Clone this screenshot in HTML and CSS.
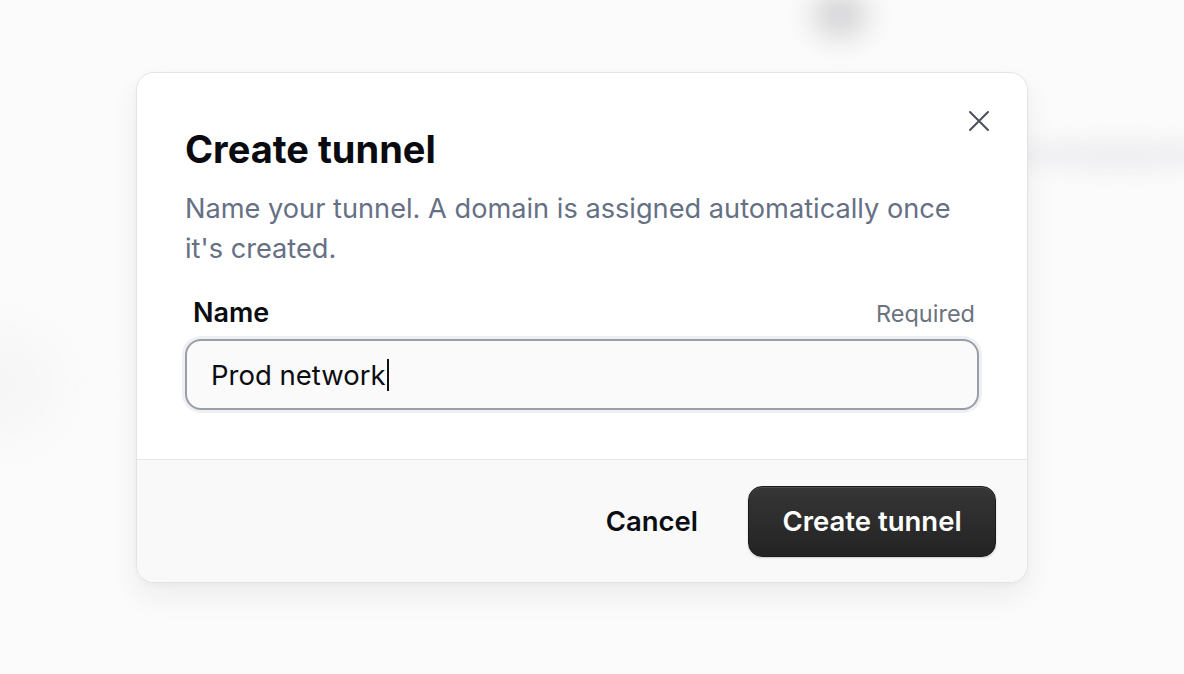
FILE: index.html
```html
<!DOCTYPE html>
<html lang="en">
    <head>
        <meta charset="UTF-8">
        <meta name="viewport" content="width=device-width, initial-scale=1.0">
        <title>Create tunnel</title>
        <link rel="stylesheet" href="styles.css">
    </head>
    <body>
        <!-- blurred page behind the dialog -->
        <div class="backdrop">
            <div class="blob blob-top"></div>
            <div class="blob blob-left"></div>
            <div class="blob blob-right"></div>
        </div>

        <div class="dialog">
            <button class="close-btn" aria-label="Close">
                <svg width="22" height="22" viewBox="0 0 22 22" fill="none" stroke="#4b4f57" stroke-width="2" stroke-linecap="round">
                    <path d="M2 2 L20 20 M20 2 L2 20"/>
                </svg>
            </button>

            <div class="dialog-body">
                <h1 class="dialog-title">Create tunnel</h1>
                <p class="dialog-desc">Name your tunnel. A domain is assigned automatically once it's created.</p>

                <div class="field">
                    <div class="field-head">
                        <label class="field-label" for="name">Name</label>
                        <span class="field-hint">Required</span>
                    </div>
                    <div class="input-box">
                        <span class="input-text">Prod network</span><span class="caret"></span>
                    </div>
                </div>
            </div>

            <div class="dialog-foot">
                <button class="btn btn-ghost">Cancel</button>
                <button class="btn btn-dark">Create tunnel</button>
            </div>
        </div>
    </body>
</html>
```

FILE: styles.css
```css
* {
    box-sizing: border-box;
}

body {
    margin: 0;
    height: 674px;
    overflow: hidden;
    background: #fbfbfb;
    font-family: Inter, "Noto Sans", sans-serif;
    color: #0b0d12;
}

.backdrop {
    position: absolute;
    inset: 0;
    overflow: hidden;
}
.blob {
    position: absolute;
    border-radius: 50%;
    filter: blur(14px);
}
.blob-top {
    left: 812px;
    top: -8px;
    width: 56px;
    height: 46px;
    background: #d4d4d6;
}
.blob-left {
    left: -70px;
    top: 330px;
    width: 130px;
    height: 110px;
    background: #f6f6f7;
    filter: blur(24px);
}
.blob-right {
    left: 1010px;
    top: 140px;
    width: 220px;
    height: 30px;
    background: #eeeef1;
    filter: blur(10px);
}

.dialog {
    position: relative;
    margin: 72px 0 0 136px;
    width: 892px;
    height: 511px;
    background: #fff;
    border: 1px solid #e4e4e8;
    border-radius: 18px;
    box-shadow: 0 14px 30px rgba(0, 0, 0, 0.06), 0 2px 6px rgba(0, 0, 0, 0.03);
    overflow: hidden;
    display: flex;
    flex-direction: column;
}

.close-btn {
    position: absolute;
    top: 37px;
    right: 37px;
    padding: 0;
    border: 0;
    background: none;
    line-height: 0;
}

.dialog-body {
    flex: 1;
    padding: 50px 48px 0 48px;
    border-bottom: 1px solid #e8e8ec;
}
.dialog-title {
    margin: 0;
    font-size: 38px;
    line-height: 52px;
    font-weight: 700;
    color: #090b10;
}
.dialog-desc {
    margin: 14px 0 0;
    font-size: 27.2px;
    line-height: 40px;
    color: #667085;
}

.field {
    margin-top: 28px;
}
.field-head {
    display: flex;
    justify-content: space-between;
    align-items: baseline;
    padding: 0 4px 0 8px;
    margin-bottom: 10px;
}
.field-label {
    font-size: 27px;
    font-weight: 600;
    line-height: 32px;
    color: #0b0d12;
}
.field-hint {
    font-size: 23.5px;
    color: #6b7280;
}

.input-box {
    height: 71px;
    border: 2px solid #9a9ea6;
    border-radius: 16px;
    background: #fafafa;
    box-shadow: 0 0 0 3px #eef0f3;
    display: flex;
    align-items: center;
    padding: 0 24px;
    font-size: 27.5px;
    color: #0b0d12;
}
.caret {
    width: 2px;
    height: 32px;
    background: #111;
    margin-left: 1px;
}

.dialog-foot {
    height: 122px;
    flex: none;
    background: #f9f9f9;
    display: flex;
    justify-content: flex-end;
    align-items: center;
    gap: 20px;
    padding: 0 31px;
}

.btn {
    font-family: Inter, "Noto Sans", sans-serif;
    font-size: 27.5px;
    font-weight: 600;
    height: 71px;
    border-radius: 14px;
    padding: 0 30px;
    cursor: pointer;
}
.btn-ghost {
    background: none;
    border: 0;
    color: #0b0d12;
}
.btn-dark {
    width: 248px;
    color: #fff;
    background: linear-gradient(#363636, #232323);
    border: 1px solid #1a1a1a;
    box-shadow: inset 0 1px 0 rgba(255, 255, 255, 0.12), 0 1px 2px rgba(0, 0, 0, 0.2);
}
```
